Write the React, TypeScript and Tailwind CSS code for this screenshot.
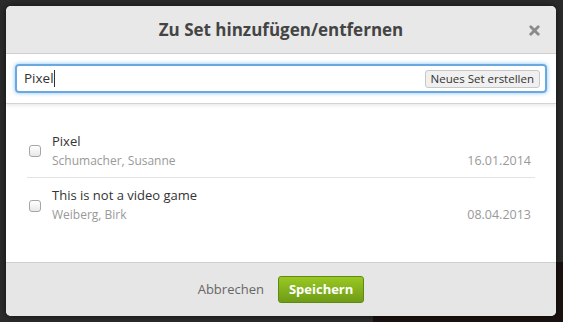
import { X } from "lucide-react";

const sets = [
  { title: "Pixel", author: "Schumacher, Susanne", date: "16.01.2014" },
  { title: "This is not a video game", author: "Weiberg, Birk", date: "08.04.2013" },
];

export default function App() {
  return (
    <div
      className="relative w-[563px] h-[322px] bg-[#2b2b2b] overflow-hidden pt-[6px] pl-[6px]"
      style={{ fontFamily: '"Open Sans", "Noto Sans", sans-serif' }}
    >
      <div className="absolute right-0 bottom-0 w-[190px] h-[60px] bg-[#1a1210]" />
      <div className="relative w-[550px] h-[310px] rounded-[5px] overflow-hidden bg-white flex flex-col shadow-[0_0_6px_rgba(0,0,0,0.6)]">
        {/* header */}
        <div className="h-[48px] bg-[#e8e8e8] border-b border-[#cfcfcf] flex items-center justify-center relative">
          <h1 className="text-[17px] font-bold text-[#444]">Zu Set hinzufügen/entfernen</h1>
          <X className="absolute right-[14px] top-[17px] w-[15px] h-[15px] text-[#8a8a8a]" strokeWidth={4.5} />
        </div>

        {/* search */}
        <div className="h-[50px] px-[9px] pt-[10px] border-b border-[#d4d4d4] shadow-[0_2px_3px_rgba(0,0,0,0.08)]">
          <div className="h-[29px] border-2 border-[#6aa9e0] rounded-[4px] shadow-[0_0_4px_rgba(82,168,236,0.7)] flex items-center pl-[7px] pr-[5px]">
            <span className="text-[13.5px] text-[#333]">Pixel</span>
            <span className="w-px h-[17px] bg-[#333]" />
            <button className="ml-auto h-[18px] px-[5px] text-[11.5px] leading-[16px] text-[#333] bg-[#f0f0f0] border border-[#c8c8c8] rounded-[3px]">
              Neues Set erstellen
            </button>
          </div>
        </div>

        {/* list */}
        <div className="flex-1 px-[21px] pt-[20px]">
          {sets.map((s, i) => (
            <div
              key={i}
              className={`flex items-center h-[54px] ${i === 0 ? "border-b border-[#e3e3e3]" : ""}`}
            >
              <span className="w-[12px] h-[12px] ml-[2px] mt-[1px] rounded-[3px] border border-[#a6a6a6] bg-gradient-to-b from-white to-[#e8e8e8]" />
              <div className="ml-[11px] flex-1 flex flex-col">
                <span className="text-[13px] leading-[20px] text-[#333]">{s.title}</span>
                <span className="text-[12px] leading-[20px] text-[#999] flex justify-between pr-[4px]">
                  <span>{s.author}</span>
                  <span className="text-[12.5px]">{s.date}</span>
                </span>
              </div>
            </div>
          ))}
        </div>

        {/* footer */}
        <div className="h-[54px] bg-[#e6e6e6] border-t border-[#cfcfcf] flex items-center justify-center gap-[14px]">
          <span className="text-[13px] text-[#666]">Abbrechen</span>
          <button className="h-[27px] px-[10px] rounded-[3px] border border-[#5f8a12] bg-gradient-to-b from-[#99c823] to-[#6f9c16] text-white text-[13px] font-bold">
            Speichern
          </button>
        </div>
      </div>
    </div>
  );
}
